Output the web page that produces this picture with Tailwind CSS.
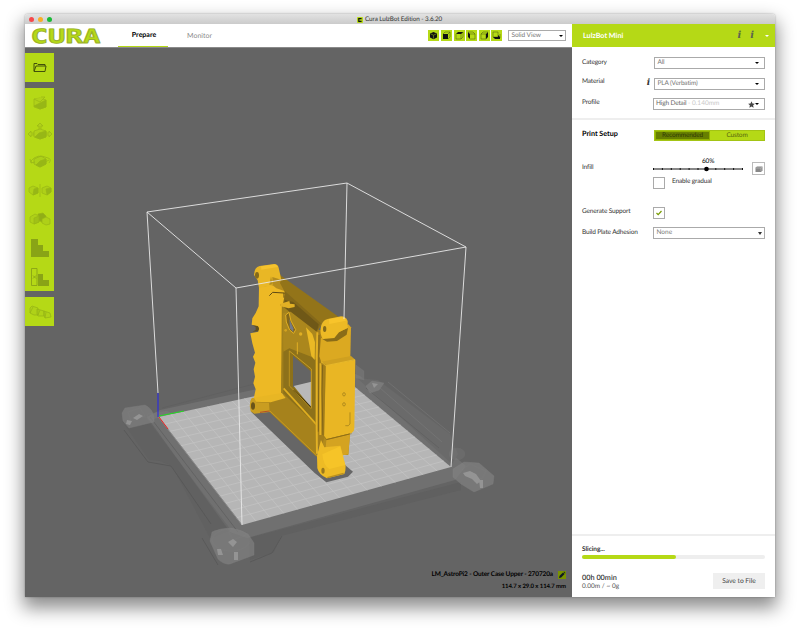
<!DOCTYPE html>
<html lang="en">
<head>
<meta charset="utf-8">
<title>Cura LulzBot Edition - 3.6.20</title>
<script src="https://cdn.jsdelivr.net/npm/@tailwindcss/browser@4"></script>
</head>
<body class="bg-white w-[800px] h-[633px] overflow-hidden pl-[25px] pt-[14px] font-['Lato',sans-serif] [text-rendering:geometricPrecision] text-[6.5px] tracking-[-0.15px] leading-[10px] text-[#333]">
<div class="w-[750px] h-[583px] rounded-t-[3px] flex flex-col shadow-[0_9px_18px_2px_rgba(0,0,0,0.45),0_0_2px_rgba(0,0,0,0.35)]">
  <header class="relative h-[10px] shrink-0 rounded-t-[3px] bg-gradient-to-b from-[#e2e2e2] to-[#cbcbcb] flex items-center px-[3.5px] gap-[4px]">
    <i class="size-[5px] rounded-full bg-[#f6494b]"></i><i class="size-[5px] rounded-full bg-[#f9ae27]"></i><i class="size-[5px] rounded-full bg-[#17ba36]"></i>
    <div class="flex items-center gap-[2.5px] ml-[301px] mt-px">
      <svg class="size-[6px]" viewBox="0 0 6 6"><rect width="6" height="6" rx="1" fill="#b5d916"/><path d="M4.6 1.6H1.8v2.8h2.8" fill="none" stroke="#111" stroke-width="1.2"/></svg>
      <span class="text-[6.3px] tracking-[-0.08px] text-[#333] whitespace-nowrap">Cura LulzBot Edition - 3.6.20</span>
    </div>
  </header>
  <div class="flex h-[573px]">
    <main class="w-[547px] flex flex-col">
      <nav class="h-[24px] bg-white border-b border-[#8a8a8a] flex">
        <svg class="w-[93px] h-[23px]" viewBox="25 24 93 23"><text x="30.500" y="42.500" font-family="DejaVu Sans Mono" font-weight="bold" font-size="19.500" letter-spacing="0" textLength="70" lengthAdjust="spacingAndGlyphs" fill="#b5d916" stroke="#98af2c" stroke-width=".8" stroke-linejoin="round">CURA</text></svg>
        <div class="w-[50px] border-b-[1.5px] border-[#b5d916] flex items-center justify-center pl-[2px] font-bold text-[7px] tracking-normal text-black">Prepare</div>
        <div class="w-[62px] flex items-center justify-center text-[7px] tracking-normal text-[#8a8a8a] pl-[1px]">Monitor</div>
        <div class="ml-auto mr-[6px] flex items-center gap-[1.6px]">
          <svg class="size-[11px]" viewBox="0 0 11 11"><path fill="#b5d916" d="M0 0h11v11H0z"/><path fill="#111" d="M5.5 2 9 3.5v4L5.5 9.2 2 7.5v-4z"/><path d="m2.5 3.8 3 1.4 3-1.4M5.5 5.2v3.5" stroke="#789a10" stroke-width=".7" fill="none"/></svg>
          <svg class="size-[11px]" viewBox="0 0 11 11"><path fill="#b5d916" d="M0 0h11v11H0z"/><path d="m2 4 2-2h5v5L7 9M7 4l2-2" fill="none" stroke="#46540d" stroke-width=".5"/><path fill="#111" d="M2 4h5v5H2z"/></svg>
          <svg class="size-[11px]" viewBox="0 0 11 11"><path fill="#b5d916" d="M0 0h11v11H0z"/><path d="M2 4v5h5V4l2-2v5L7 9" fill="none" stroke="#46540d" stroke-width=".5"/><path fill="#111" d="m2 4 2-2h5L7 4z"/></svg>
          <svg class="size-[11px]" viewBox="0 0 11 11"><path fill="#b5d916" d="M0 0h11v11H0z"/><path d="M4 4h5v5H4M2 2h5l2 2" fill="none" stroke="#46540d" stroke-width=".5"/><path fill="#111" d="m2 2 2 2v5L2 7z"/></svg>
          <svg class="size-[11px]" viewBox="0 0 11 11"><path fill="#b5d916" d="M0 0h11v11H0z"/><path d="M2 4h5v5H2zl2-2h5" fill="none" stroke="#46540d" stroke-width=".5"/><path fill="#111" d="m7 4 2-2v5L7 9z"/></svg>
          <svg class="size-[11px]" viewBox="0 0 11 11"><path fill="#b5d916" d="M0 0h11v11H0z"/><path d="M2 2h5v5H2zM9 4v4" fill="none" stroke="#46540d" stroke-width=".5"/><path fill="#111" d="M2 7h5l2 2H4zM7 5l2 2v2L7 7z"/></svg>
          <div class="ml-[4px] w-[58px] h-[11px] border border-[#aaa] flex items-center justify-between px-[2.5px] text-[6.5px] tracking-[-0.05px] text-[#777]">Solid View<i class="border-x-[2px] border-x-transparent border-t-[2.5px] border-t-black"></i></div>
        </div>
      </nav>
      <section class="relative w-[547px] h-[549px] bg-[#646464] flex flex-col justify-between">
        <svg class="absolute inset-0 w-[547px] h-[549px]" viewBox="25 48 547 549">
          <!-- printer frame -->
          <path fill="#707070" d="M147 417 160 410 345 370 360 376 466 466 455 480 247 538 230 532z"/>
          <path fill="#5c5c5c" d="m122 421 24-3 85 112-21 8-38-72-12-5-11-1z" opacity=".35"/>
          <path d="m124 430 24 32 23 4 40 58M202 538l16 27M250 562l22-9 10-17" fill="none" stroke="#555" stroke-width=".7"/>
          <path d="m250 560 24-8 7-16 180-46 0-8-212 56z" fill="#5b5b5b" opacity=".4"/>
          <path fill="#6a6a6a" d="m357 378 21 2 72 54 8 20-6 10z"/>
          <path d="m388 382 62 51M380 388l62 54" stroke="#7c7c7c" stroke-width=".5"/>
          <path d="m366 388 73 60M162 408l92-24M150 417l88 115" stroke="#606060" stroke-width=".8" fill="none"/>
          <g fill="#858585" stroke="#8e8e8e" stroke-width=".4" opacity=".62">
            <path d="m122 413 3-5 20-3q7 3 9 12v5l-25 6-6-7z"/><path d="m128 412 12-4 5 8-14 5z"/><path d="m147 414 20-3 5 3-24 6z" opacity=".5"/>
            <path d="m210 541 2-9q8-4 20-4l16 6 6 9v12l-24 9q-6 1-12-5z"/><ellipse cx="231" cy="540" rx="19" ry="11"/><path d="m228 530 5 10 13-5" fill="none"/>
            <path d="m453 469 11-7 15 1 15 13-1 8-19 8-13-8-8-7z"/><path d="m462 470 8-6 16 7-4 8-8-3z"/>
            <path d="m366 386 6-5 12 2-5 7-9 3z"/><path d="m356 365 8 6v9l-8-2z" opacity=".7"/><ellipse cx="457" cy="454" rx="8" ry="6" opacity=".4"/>
          </g>
          <g fill="#a0a0a0" opacity=".7"><path d="m133 418 6-4 4 2-6 4zM228 542l5-3 4 3-4 5zM217 549h4l2 6h-5zM234 552h4v8h-4zM463 473l7-2 6 3 5 7-4 3-5-5-7-3zM479 480h4v8h-3zM372 383l6 1-4 4zM127 420l5 1-2 4-4-1z"/></g>
          <!-- build plate -->
          <path fill="#b6b6b6" d="M158.500 417 343 377 451 467 242 525z"/>
          <path id="grid" fill="none" stroke="#c6c6c6" stroke-width=".65"/>
          <path d="M158.500 417 242 525" stroke="#888" stroke-width="1"/>
          <!-- model -->
          <g transform="translate(235 255) scale(.33333)" stroke-linejoin="round">
            <path fill="#666" d="m48 470 12-18 100 0 170 178 24 20-15 15-65 17-35-28z"/>
            <path fill="#b38b1c" d="m240 225 98 0 8 300-6 75-60 0-32-50z"/>
            <path fill="#937419" d="M120 30 138 62 300 178 310 185 265 200 250 225 175 175 110 100z"/>
            <path fill="#846819" d="m110 80 30 20 118 105-10 20-75-50-45-40z"/>
            <path fill="#a3821c" d="m142 150 108 72 5 298-115-105z"/>
            <path fill="#8d711a" d="m145 285 98-50v290l-98-110z"/>
            <path fill="#6f5817" d="m150 135 25 6 76 67-5 25-70-52-30-25z"/>
            <path fill="#ab871d" d="m143 175 24-5 80 62-2 82-20-10-62-24-18 10z"/>
            <path fill="#646464" d="m174 302 55 48v38l-55 8z"/><path fill="#b9b9b9" d="m176 393 53-13v78z"/>
            <path d="m176 405 53 53" stroke="#3d310e" stroke-width="4"/>
            <path d="m163 288v105l10 9 56 60" stroke="#b8911f" stroke-width="3" fill="none"/>
            <path d="m163 288 66 54v117" stroke="#c79c21" stroke-width="3" fill="none"/>
            <path fill="#edb925" d="m72 97 38-6 40 27-7 32-3 267-84 14 6-28-7-18 5-20-4-22 5-20-7-18 6-12-8-28-6-30 24-5-3-16-17-5 2-19 10-16 9-20z"/>
            <path fill="#60511f" d="m52 211 16 2q8 8 1 16l-17 1 10-5v-9z"/>
            <path d="m142 150-2 265" stroke="#95761a" stroke-width="3"/>
            <path fill="#a6821c" d="m57 440 90-22 100 94-2 94-142-135-48 1z"/>
            <path fill="#e8b624" d="m57 428 83-14 12 15-45 13-50-2z"/>
            <path d="m146 400 98 108" stroke="#e0ae20" stroke-width="5" fill="none"/><path d="M105 468l142 135" stroke="#c79a20" stroke-width="3"/>
            <path fill="#c99d21" d="m46 438q4-14 12-8l6 12 38 1 2 28-46 5-11-7q-5-15-1-31z"/><ellipse cx="54" cy="453" rx="6" ry="11" fill="#69531a"/>
            <path fill="#e9b725" d="M57 60Q58 36 74 33L118 27Q128 27 131 38L139 74 110 92 72 99 68 76z"/><path fill="#fac832" d="M78 34 118 28q8 0 11 8l-50 8z" opacity=".7"/><ellipse cx="66" cy="61" rx="6" ry="10" fill="#856a1b"/><path d="m108 64-5 26 10-2z" fill="#b58e1d"/><path fill="#b48c1e" d="m112 66 27 8-4 10 14 26-24-7-12-11z"/>
            <path fill="#edb925" d="m112 90 12 10 24 8v10l-38-4z"/>
            <path d="m103 122 10-10 34 2v14M137 150l20 5" fill="none" stroke="#5d4914" stroke-width="3"/>
            <path d="m137 146 26-8 2 8 14 2v8l-18 4-24-6z" fill="#e2b024"/>
            <path d="m152 180 10-8 6 26 14 26-6 11-12-10-10-24z" stroke="#e0af23" stroke-width="3" fill="#83671a"/><path fill="#747a88" d="m163 192 12 28v12l-10-12z"/><path d="M187 262v36" stroke="#e0af23" stroke-width="3"/><circle cx="197" cy="237" r="5" fill="#e0af23"/><circle cx="152" cy="226" r="4" fill="#d3a320"/>
            <path fill="#eab925" d="m213 217 19 20 8 25-1 53-10-12z"/>
            <path fill="#a47e1b" d="m244 228 18-5 8 95-2 230-16 50-10-90z"/>
            <path d="m247 232-2 80v200l1 84M256 325v215" stroke="#e3b124" stroke-width="6" fill="none"/>
            <path d="m252 240-2 290M263 330l-2 80 3 130" stroke="#705818" stroke-width="2" fill="none"/>
            <path fill="#dba921" d="m258 250 82-42 8 9-2 90-86 17-7-20z"/>
            <path fill="#8a6c18" d="m262 252 77-33-4 20-29 19-30 2z"/>
            <path fill="#edba25" d="M257 220Q260 196 278 192L318 184Q332 184 338 198L338 218 312 232 298 249 264 252Q254 240 257 220z"/><path fill="#ffcb30" d="m282 192 36-6q10 0 15 11l-50 10z" opacity=".6"/><ellipse cx="269" cy="222" rx="5" ry="9" fill="#846a1b"/>
            <path fill="#cfa020" d="m258 320 90-17 13 11-82 20z"/>
            <path fill="#e9b624" d="m272 333 89-19-3 206q0 10-8 14l-75 18-8-10z"/>
            <path d="m271 333-5 211 8 10 76-18" stroke="#9b7919" stroke-width="2" fill="none"/><path d="m258 320 14 12 88-18" stroke="#f2c22f" stroke-width="2" fill="none"/>
            <g fill="none" stroke="#977719" stroke-width="2"><ellipse cx="327" cy="418" rx="4" ry="5"/><ellipse cx="327" cy="448" rx="4" ry="5"/><path d="M345 472v35q-4 8-14 5"/></g>
            <path fill="#d4a321" d="m274 555 71-17-5 60-22 4-46-22z"/><path d="m274 554 70-17" stroke="#916f17" stroke-width="3"/>
            <path fill="#eebb25" d="M246 602 258 555 268 577 316 572 332 634Q332 650 328 657L276 670Q252 660 247 640z"/>
            <path fill="#ffd02c" d="m262 598 54-24 15 56-48 12q-18-10-21-44z" opacity=".45"/><ellipse cx="264" cy="647" rx="5" ry="9" fill="#9a791d"/><path d="m277 668 49-13" stroke="#ba901f" stroke-width="4"/>
            <path d="m75 472 28-4" stroke="#b44e28" stroke-width="3"/>
          </g>
          <!-- build volume -->
          <path d="M158 393 147 212 347 183 466 247 451 467M147 212l89 76 230-41M236 288l6 237M347 183l-3 136" fill="none" stroke="#e9e9e9" stroke-width=".9"/>
          <path d="M158 393v24" stroke="#2222ee"/><path d="m159 416 25-5" stroke="#22dd22"/><path d="m159 417 9 12" stroke="#ee2222"/>
        </svg>
        <aside class="relative w-[29px] pt-[5px] flex flex-col gap-[6px]">
          <div class="h-[29px] bg-[#b5d916] flex items-center justify-center"><svg class="w-[14px] h-[11px]" viewBox="0 0 14 11" fill="none" stroke="#42500b" stroke-width="1"><path d="M1 9V1.500h3l1 1h7V4M1 9.500 3 4h10l-1 5.500z"/></svg></div>
          <div class="h-[203px] bg-[#b5d916] flex flex-col items-center justify-around">
            <svg class="w-[24px] h-[20px]" viewBox="0 0 24 20" stroke="#98b616" stroke-width=".7" fill="#b0d119"><path d="m6 6 6-1 6 2v7l-6 2-6-2z"/><path fill="#97b716" d="m6 13 6-3 6-3v7l-6 2z"/><path d="m6 6 6 3 5-5M13 4h4"/></svg>
            <svg class="w-[24px] h-[20px]" viewBox="0 0 24 20" stroke="#98b616" stroke-width=".7" fill="#b0d119"><path d="M11 7V4H9l3-3 3 3h-2v3M6 13H3v2l-3-3 3-3v2h3M18 13h3v2l3-3-3-3v2h-3M6 9l6-2 6 2v6l-6 2-6-2z"/><path fill="#97b716" d="m11 11 7-2v6l-6 2-5-2z"/></svg>
            <svg class="w-[24px] h-[20px]" viewBox="0 0 24 20" stroke="#98b616" stroke-width=".8" fill="#acd018"><path d="m6 8 7-3 5 3v5l-6 3-6-3z"/><path fill="#97b716" d="m12 10 6-2v5l-6 3-4-2z"/><path d="M21 12q3-4-1-5Q9 2 3 10l1 2M2 8l1 4 4-1M12 12q5 0 9-3" fill="none"/></svg>
            <svg class="w-[24px] h-[20px]" viewBox="0 0 24 20" stroke="#98b616" stroke-width=".7" fill="#aed018"><path d="m1 8 4-2 5 2v5l-5 2-4-3zM14 8l5-2 4 2v4l-4 3-5-2zM12 4v13"/><path d="m6 9 4-1v5l-5 2zM18 9l5-1v4l-4 3z" fill="#97b716"/></svg>
            <svg class="w-[24px] h-[20px]" viewBox="0 0 24 20" stroke="#98b616" stroke-width=".7" fill="#aed018"><path d="m10 5 5-1 3 3v4l-4 2-4-2z" fill="#91ae17"/><path d="m2 8 5-3 4 2v6l-5 2-4-2z"/><path d="m14 10 4-2 4 2v5l-4 1-4-2z"/><path d="m6 9 5-2v6l-5 2z" fill="#a0c117"/></svg>
            <svg class="w-[20px] h-[20px]" viewBox="0 0 20 20"><path d="M1 1h7v6h5v6h6v6H1z" fill="#89a416"/></svg>
            <svg class="w-[20px] h-[20px]" viewBox="0 0 20 20"><path d="M8 7h5v6h6v6H8z" fill="#89a416"/><path d="M1.500 1.500h5.500v17h-5.500zM3 8.500l3 3m0-3-3 3" fill="none" stroke="#89a416" stroke-width=".9"/></svg>
          </div>
          <div class="h-[29px] bg-[#b5d916] flex items-center justify-center"><svg class="w-[24px] h-[16px]" viewBox="0 0 24 16" stroke="#93b116" stroke-width=".7" fill="#afd218"><path d="m2 4 2-2 6 2v7l-4 0-4-2zM9 5l7 2v5l-6 0-1-2zM16 7l6 2 1 4-6 1-1-3z"/><path d="m2 9 3-6M10 11l2-5M17 14l1-6"/></svg></div>
        </aside>
        <div class="relative flex flex-col items-end pr-[6px] pb-[5px] font-bold text-black">
          <div class="flex items-center gap-[5px] h-[12px] text-[6.5px] tracking-[-0.13px]"><span id="job">LM_AstroPi2 - Outer Case Upper - 270720a</span><svg class="size-[8px]" viewBox="0 0 8 8"><path fill="#799300" d="M0 0h8v8H0z"/><path fill="#111b22" d="m1 7 .6-2.200L5 1.400l1.600 1.600L3.200 6.400zM5.500 1l.6-.4 1.400 1.400-.5.500z"/></svg></div>
          <div class="h-[11px] text-[6px] tracking-[-0.08px] leading-[11px]">114.7 x 29.0 x 114.7 mm</div>
        </div>
      </section>
    </main>
    <aside class="w-[203px] bg-white flex flex-col">
      <div class="h-[23px] bg-[#b5d916] flex items-center pl-[11px] pr-[6px] text-white font-bold text-[7.200px] tracking-normal">LulzBot Mini
        <span class="ml-auto flex gap-[9px] mr-[11px] font-['DejaVu_Serif',serif] italic font-bold text-[10px] text-[#5c6450]"><b>i</b><b>i</b></span>
        <i class="border-x-[2px] border-x-transparent border-t-[2.500px] border-t-white"></i>
      </div>
      <div class="h-[71px] pt-[10px] pl-[10px] pr-[10px] flex flex-col gap-[8.500px]">
        <div class="flex h-[12px] justify-between"><span class="mt-px">Category</span><div class="w-[111px] h-[12px] border border-[#aaa] flex items-center justify-between px-[2.500px] pr-[5px] text-[#777]">All<i class="border-x-[2px] border-x-transparent border-t-[2.500px] border-t-black"></i></div></div>
        <div class="flex h-[12px]"><span class="-mt-px">Material</span><b class="ml-auto mr-[4px] font-['DejaVu_Serif',serif] italic text-[9px]">i</b><div class="w-[111px] h-[12px] border border-[#aaa] flex items-center justify-between px-[2.500px] pr-[5px] text-[#777]">PLA (Verbatim)<i class="border-x-[2px] border-x-transparent border-t-[2.500px] border-t-black"></i></div></div>
        <div class="flex h-[12px] justify-between"><span>Profile</span><div class="w-[112px] h-[12px] border border-[#aaa] flex items-center px-[2px] pr-[5px] text-[#666]"><span>High Detail <span class="text-[#c9c9c9] tracking-normal">- 0.140mm</span></span><svg class="ml-auto size-[7px]" viewBox="0 0 10 10"><path fill="#444" d="m5 .3 1.400 3.100 3.400.4-2.500 2.300.7 3.400-3-1.700-3 1.700.7-3.400L.2 3.800l3.400-.4z"/></svg><i class="border-x-[2px] border-x-transparent border-t-[2.500px] border-t-black"></i></div></div>
      </div>
      <div class="h-[2px] bg-[#eee]"></div>
      <div class="pl-[10px] pr-[10px] pt-[9px] flex flex-col">
        <div class="flex justify-between h-[12px] items-center"><b class="text-[7.200px] tracking-normal text-black -mt-[2px]">Print Setup</b><div class="w-[111px] h-[11px] flex border border-[#a3c414] text-center"><span class="w-[55px] bg-[#677f00] text-[#303a08] border border-[#91b000] leading-[8px]">Recommended</span><span class="flex-1 bg-[#b5d916] text-[#59680f] leading-[10px]">Custom</span></div></div>
        <div class="flex h-[37px] mt-[15px] relative">
          <span class="mt-[7px] w-[71px]">Infill</span>
          <div class="w-[90px]">
            <div class="pl-[49px] h-[10px] leading-[12px] text-black">60%</div>
            <svg class="w-[90px] h-[6px]" viewBox="0 0 90 6"><path d="M0 3h90" stroke="#111"/><path d="M.5 2v2m8.900-2v2m8.900-2v2m8.900-2v2m8.900-2v2m8.900-2v2m8.900-2v2m8.900-2v2m8.900-2v2m8.900-2v2m8.900-2v2" stroke="#111"/><circle cx="53.500" cy="3" r="2.300"/></svg>
            <div class="flex gap-[7px] mt-[5px]"><i class="size-[12px] border border-[#aaa] bg-white"></i><span class="whitespace-nowrap">Enable gradual</span></div>
          </div>
          <div class="ml-auto mt-[6px] size-[13px] border border-[#bbb] flex items-center justify-center"><svg class="size-[8px]" viewBox="0 0 8 8"><path fill="#888" d="m.5 2.500 1.500-1h5.500v4l-1.500 1.500H.5z"/><path d="M1 3h5l1-1M6 3v3" fill="none" stroke="#ddd" stroke-width=".4"/></svg></div>
        </div>
        <div class="flex mt-[14px] h-[12px]"><span class="w-[71px] whitespace-nowrap">Generate Support</span><div class="size-[12px] border border-[#aaa] flex items-center justify-center"><svg class="size-[6px]" viewBox="0 0 6 6"><path d="m.5 3 1.700 1.700L5.500 1" fill="none" stroke="#779b00" stroke-width="1.200"/></svg></div></div>
        <div class="flex mt-[8px] h-[12px] items-center"><span class="w-[71px] whitespace-nowrap">Build Plate Adhesion</span><div class="w-[112px] h-[12px] border border-[#aaa] flex items-center justify-between px-[2.500px] tracking-normal text-[#777]">None<i class="border-x-[2.500px] border-x-transparent border-t-[3px] border-t-[#333]"></i></div></div>
      </div>
      <div class="mt-auto h-[63px] border-t-2 border-[#eee] px-[10px] pt-[9px]">
        <b class="block h-[10px] tracking-[-0.05px]">Slicing...</b>
        <div class="h-[4px] rounded-full bg-[#eee]"><div class="h-full rounded-full bg-[#b5d916]" style="width:51.500%"></div></div>
        <div class="flex justify-between mt-[14px]"><div class="tracking-normal"><div class="font-semibold leading-[10px] text-[7.300px]">00h 00min</div><div class="text-[6.500px] leading-[8px] text-[#555]">0.00m / ~ 0g</div></div><div class="w-[52px] h-[16px] bg-[#efefef] flex items-center justify-center text-[6.700px] tracking-[-0.03px] text-[#444]">Save to File</div></div>
      </div>
    </aside>
  </div>
</div>
<script>
const corners = [[158.5,417],[343,377],[451,467],[242,525]];
const at = (u,v) => [0,1].map(i => ((1-u)*(1-v)*corners[0][i] + u*(1-v)*corners[1][i] + u*v*corners[2][i] + (1-u)*v*corners[3][i]).toFixed(1)).join(' ');
let d = '';
for (let n = 1; n < 15; n++) { const t = n/15; d += `M${at(t,0)}L${at(t,1)}M${at(0,t)}L${at(1,t)}`; }
document.getElementById('grid').setAttribute('d', d);
</script>
</body>
</html>
